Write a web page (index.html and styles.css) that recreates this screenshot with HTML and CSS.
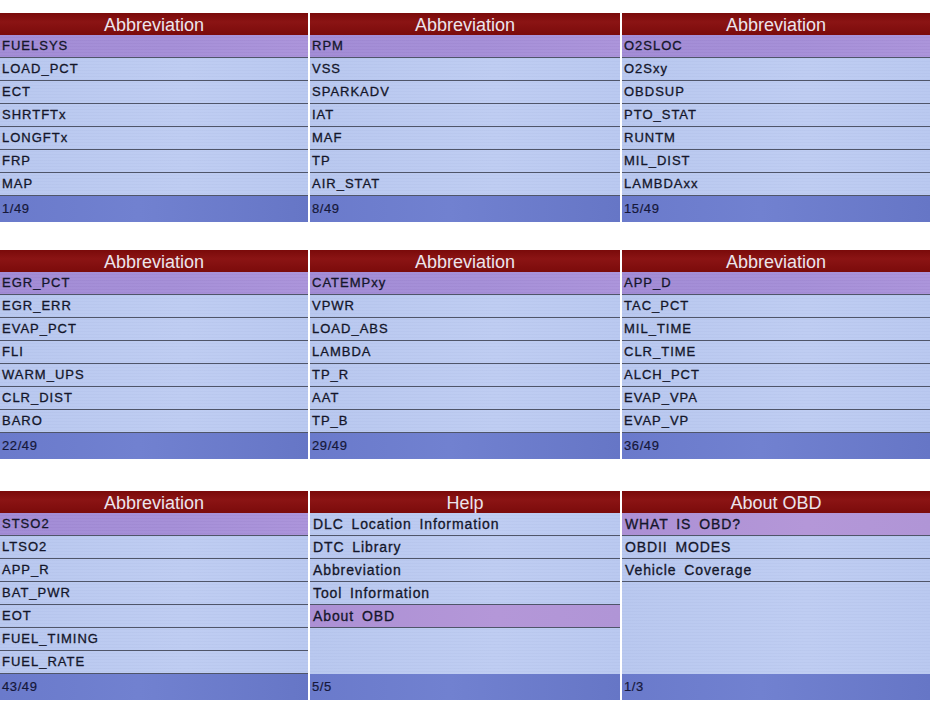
FILE: index.html
```html
<!DOCTYPE html>
<html lang="en">
<head>
<meta charset="utf-8">
<title>OBD Scanner Screens</title>
<link rel="stylesheet" href="styles.css">
</head>
<body>
<main class="wall">
  <section class="shelf shelf-top">
    <div class="screen">
      <div class="title">Abbreviation</div>
      <ul class="menu">
        <li class="item sel">FUELSYS</li>
        <li class="item">LOAD_PCT</li>
        <li class="item">ECT</li>
        <li class="item">SHRTFTx</li>
        <li class="item">LONGFTx</li>
        <li class="item">FRP</li>
        <li class="item">MAP</li>
      </ul>
      <div class="status">1/49</div>
    </div>
    <div class="screen">
      <div class="title">Abbreviation</div>
      <ul class="menu">
        <li class="item sel">RPM</li>
        <li class="item">VSS</li>
        <li class="item">SPARKADV</li>
        <li class="item">IAT</li>
        <li class="item">MAF</li>
        <li class="item">TP</li>
        <li class="item">AIR_STAT</li>
      </ul>
      <div class="status">8/49</div>
    </div>
    <div class="screen">
      <div class="title">Abbreviation</div>
      <ul class="menu">
        <li class="item sel">O2SLOC</li>
        <li class="item">O2Sxy</li>
        <li class="item">OBDSUP</li>
        <li class="item">PTO_STAT</li>
        <li class="item">RUNTM</li>
        <li class="item">MIL_DIST</li>
        <li class="item">LAMBDAxx</li>
      </ul>
      <div class="status">15/49</div>
    </div>
  </section>

  <section class="shelf shelf-mid">
    <div class="screen">
      <div class="title">Abbreviation</div>
      <ul class="menu">
        <li class="item sel">EGR_PCT</li>
        <li class="item">EGR_ERR</li>
        <li class="item">EVAP_PCT</li>
        <li class="item">FLI</li>
        <li class="item">WARM_UPS</li>
        <li class="item">CLR_DIST</li>
        <li class="item">BARO</li>
      </ul>
      <div class="status">22/49</div>
    </div>
    <div class="screen">
      <div class="title">Abbreviation</div>
      <ul class="menu">
        <li class="item sel">CATEMPxy</li>
        <li class="item">VPWR</li>
        <li class="item">LOAD_ABS</li>
        <li class="item">LAMBDA</li>
        <li class="item">TP_R</li>
        <li class="item">AAT</li>
        <li class="item">TP_B</li>
      </ul>
      <div class="status">29/49</div>
    </div>
    <div class="screen">
      <div class="title">Abbreviation</div>
      <ul class="menu">
        <li class="item sel">APP_D</li>
        <li class="item">TAC_PCT</li>
        <li class="item">MIL_TIME</li>
        <li class="item">CLR_TIME</li>
        <li class="item">ALCH_PCT</li>
        <li class="item">EVAP_VPA</li>
        <li class="item">EVAP_VP</li>
      </ul>
      <div class="status">36/49</div>
    </div>
  </section>

  <section class="shelf shelf-low">
    <div class="screen">
      <div class="title">Abbreviation</div>
      <ul class="menu">
        <li class="item sel">STSO2</li>
        <li class="item">LTSO2</li>
        <li class="item">APP_R</li>
        <li class="item">BAT_PWR</li>
        <li class="item">EOT</li>
        <li class="item">FUEL_TIMING</li>
        <li class="item">FUEL_RATE</li>
      </ul>
      <div class="status">43/49</div>
    </div>
    <div class="screen">
      <div class="title">Help</div>
      <ul class="menu menu-words">
        <li class="item">DLC Location Information</li>
        <li class="item">DTC Library</li>
        <li class="item">Abbreviation</li>
        <li class="item">Tool Information</li>
        <li class="item sel">About OBD</li>
        <li class="item blank"></li>
        <li class="item blank"></li>
      </ul>
      <div class="status">5/5</div>
    </div>
    <div class="screen">
      <div class="title">About OBD</div>
      <ul class="menu menu-words">
        <li class="item sel">WHAT IS OBD?</li>
        <li class="item">OBDII MODES</li>
        <li class="item">Vehicle Coverage</li>
        <li class="item blank"></li>
        <li class="item blank"></li>
        <li class="item blank"></li>
        <li class="item blank"></li>
      </ul>
      <div class="status">1/3</div>
    </div>
  </section>
</main>
</body>
</html>
```

FILE: styles.css
```css
html, body {
  margin: 0;
  padding: 0;
  background: #ffffff;
}

.wall {
  width: 930px;
  padding-top: 13px;
  display: flex;
  flex-direction: column;
}

.shelf {
  display: grid;
  grid-template-columns: 308px 310px 308px;
  column-gap: 2px;
}

.shelf-top { margin-bottom: 28px; }
.shelf-mid { margin-bottom: 32px; }

.screen {
  display: flex;
  flex-direction: column;
  height: 209px;
  font-family: "Liberation Sans", Arial, sans-serif;
  background: #bccbf0;
}

/* dark red caption strip */
.title {
  height: 22px;
  line-height: 24px;
  text-align: center;
  font-size: 18px;
  color: #ece4ec;
  background: linear-gradient(180deg, #7a0a0a 0%, #8b1414 40%, #7b0b0b 100%);
  overflow: hidden;
  white-space: nowrap;
}

.menu {
  list-style: none;
  margin: 0;
  padding: 0;
  flex: 1;
  display: flex;
  flex-direction: column;
  background:
    repeating-linear-gradient(180deg, rgba(255,255,255,0) 0 2px, rgba(120,135,185,0.06) 2px 3px),
    linear-gradient(90deg, #b9c8ef 0%, #bfcdf2 60%, #bac9f0 100%);
}

.item {
  height: 22px;
  line-height: 22px;
  border-bottom: 1px solid #4f5569;
  padding-left: 2px;
  font-size: 13px;
  letter-spacing: 1px;
  color: #14162a;
  white-space: nowrap;
  -webkit-text-stroke: 0.3px #14162a;
}

.item.sel {
  background:
    repeating-linear-gradient(180deg, rgba(255,255,255,0) 0 2px, rgba(90,60,140,0.06) 2px 3px),
    linear-gradient(90deg, #a38dd6 0%, #a690d8 55%, #ac95db 100%);
}

.item.blank {
  border-bottom-color: transparent;
}

.menu-words .item {
  font-size: 14px;
  letter-spacing: 0.9px;
  word-spacing: 3px;
  padding-left: 3px;
}

.menu-words .item.sel {
  background: linear-gradient(90deg, #ac90d4 0%, #b497d8 60%, #b095d6 100%);
}

/* page counter bar */
.status {
  height: 26px;
  line-height: 26px;
  padding-left: 2px;
  font-size: 13px;
  letter-spacing: 0.6px;
  color: #16183a;
  background: linear-gradient(90deg, #6a7acb 0%, #7181d0 45%, #6676c6 100%);
  -webkit-text-stroke: 0.2px #16183a;
}
```
